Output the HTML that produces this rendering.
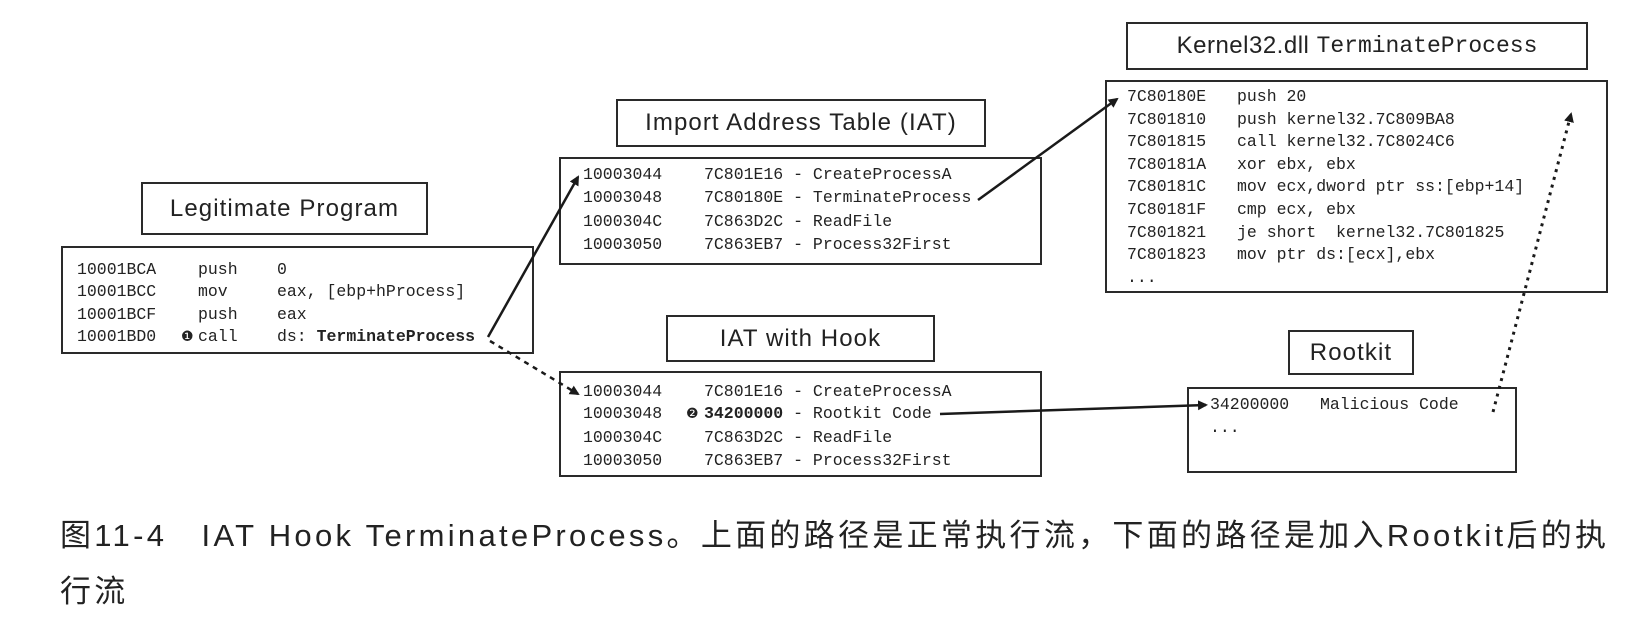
<!DOCTYPE html>
<html><head><meta charset="utf-8"><style>
html,body{margin:0;padding:0;background:#fff;width:1648px;height:636px;overflow:hidden;position:relative}
.b{position:absolute;border:2px solid #2a2a2a;box-sizing:border-box;background:#fff}
.t{font-family:"Liberation Sans",sans-serif;font-size:24px;letter-spacing:1.1px;color:#222;text-align:center;display:flex;align-items:center;justify-content:center;white-space:nowrap}
.m{position:absolute;font-family:"Liberation Mono",monospace;font-size:16.5px;color:#222;white-space:pre;line-height:16px}
.k{line-height:22.6px}
.cap{position:absolute;left:60px;font-family:"Liberation Sans","Noto Sans CJK SC",sans-serif;font-size:31px;letter-spacing:3.3px;color:#222;white-space:pre}
</style></head><body>

<div class="b t" style="left:141px;top:182px;width:287px;height:53px">Legitimate Program</div>
<div class="b" style="left:61px;top:246px;width:473px;height:108px"></div>
<div class="m" style="left:77px;top:262px">10001BCA</div><div class="m" style="left:198px;top:262px">push</div><div class="m" style="left:277px;top:262px">0</div>
<div class="m" style="left:77px;top:284px">10001BCC</div><div class="m" style="left:198px;top:284px">mov</div><div class="m" style="left:277px;top:284px">eax, [ebp+hProcess]</div>
<div class="m" style="left:77px;top:307px">10001BCF</div><div class="m" style="left:198px;top:307px">push</div><div class="m" style="left:277px;top:307px">eax</div>
<div class="m" style="left:77px;top:329px">10001BD0</div><div class="m" style="left:181px;top:329px;font-family:'DejaVu Sans';font-size:14px">❶</div><div class="m" style="left:198px;top:329px">call</div><div class="m" style="left:277px;top:329px">ds: <b>TerminateProcess</b></div>

<div class="b t" style="left:616px;top:99px;width:370px;height:48px">Import Address Table (IAT)</div>
<div class="b" style="left:559px;top:157px;width:483px;height:108px"></div>
<div class="m" style="left:583px;top:167px">10003044</div><div class="m" style="left:704px;top:167px">7C801E16 - CreateProcessA</div>
<div class="m" style="left:583px;top:190px">10003048</div><div class="m" style="left:704px;top:190px">7C80180E - TerminateProcess</div>
<div class="m" style="left:583px;top:214px">1000304C</div><div class="m" style="left:704px;top:214px">7C863D2C - ReadFile</div>
<div class="m" style="left:583px;top:237px">10003050</div><div class="m" style="left:704px;top:237px">7C863EB7 - Process32First</div>

<div class="b t" style="left:666px;top:315px;width:269px;height:47px">IAT with Hook</div>
<div class="b" style="left:559px;top:371px;width:483px;height:106px"></div>
<div class="m" style="left:583px;top:384px">10003044</div><div class="m" style="left:704px;top:384px">7C801E16 - CreateProcessA</div>
<div class="m" style="left:583px;top:406px">10003048</div><div class="m" style="left:686px;top:406px;font-family:'DejaVu Sans';font-size:14px">❷</div><div class="m" style="left:704px;top:406px"><b>34200000</b> - Rootkit Code</div>
<div class="m" style="left:583px;top:430px">1000304C</div><div class="m" style="left:704px;top:430px">7C863D2C - ReadFile</div>
<div class="m" style="left:583px;top:453px">10003050</div><div class="m" style="left:704px;top:453px">7C863EB7 - Process32First</div>

<div class="b t" style="left:1126px;top:22px;width:462px;height:48px;letter-spacing:0.5px">Kernel32.dll&nbsp;<span style="font-family:'Liberation Mono',monospace;font-size:23px;letter-spacing:0">TerminateProcess</span></div>
<div class="b" style="left:1105px;top:80px;width:503px;height:213px"></div>
<div class="m k" style="left:1127px;top:86px">7C80180E
7C801810
7C801815
7C80181A
7C80181C
7C80181F
7C801821
7C801823
...</div>
<div class="m k" style="left:1237px;top:86px">push 20
push kernel32.7C809BA8
call kernel32.7C8024C6
xor ebx, ebx
mov ecx,dword ptr ss:[ebp+14]
cmp ecx, ebx
je short  kernel32.7C801825
mov ptr ds:[ecx],ebx</div>

<div class="b t" style="left:1288px;top:330px;width:126px;height:45px">Rootkit</div>
<div class="b" style="left:1187px;top:387px;width:330px;height:86px"></div>
<div class="m" style="left:1210px;top:397px">34200000</div><div class="m" style="left:1320px;top:397px">Malicious Code</div>
<div class="m" style="left:1210px;top:420px">...</div>

<svg width="1648" height="636" style="position:absolute;left:0;top:0" fill="none" stroke="#1a1a1a" stroke-width="2.5">
<defs><marker id="a" markerWidth="10" markerHeight="10" refX="8" refY="5" orient="auto" markerUnits="userSpaceOnUse"><path d="M0,0 L10,5 L0,10 z" fill="#1a1a1a" stroke="none"/></marker></defs>
<line x1="488" y1="337" x2="578" y2="177" marker-end="url(#a)"/>
<line x1="978" y1="200" x2="1117" y2="99" marker-end="url(#a)"/>
<line x1="490" y1="341" x2="578" y2="394" stroke-dasharray="5,5" marker-end="url(#a)"/>
<line x1="940" y1="414" x2="1206" y2="405" marker-end="url(#a)"/>
<line x1="1493" y1="412" x2="1571" y2="114" stroke-dasharray="3,5" stroke-width="3" marker-end="url(#a)"/>
</svg>

<div class="cap" style="top:510px">图11-4　IAT Hook TerminateProcess。上面的路径是正常执行流，下面的路径是加入Rootkit后的执</div>
<div class="cap" style="top:566px">行流</div>
</body></html>
